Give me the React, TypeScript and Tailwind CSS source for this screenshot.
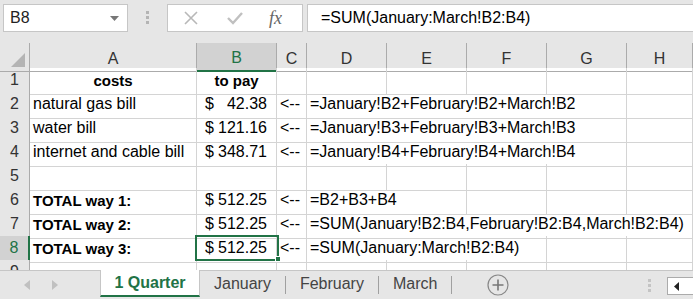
import React from "react";

const FONT = { fontFamily: '"Liberation Sans", Arial, sans-serif' };
const COLS = "grid grid-cols-[30px_167px_80px_30px_80px_80px_80px_80px_66px]";

type Cell = {
  text?: string;
  span?: string;
  align?: "left" | "center";
  bold?: boolean;
  money?: [string, string];
};

const rows: Cell[][] = [
  [
    { text: "costs", align: "center", bold: true },
    { text: "to pay", align: "center", bold: true },
    {},
    {},
    {},
    {},
    {},
    {},
  ],
  [
    { text: "natural gas bill" },
    { money: ["$", "42.38"] },
    { text: "<--" },
    { text: "=January!B2+February!B2+March!B2", span: "col-span-4" },
    {},
  ],
  [
    { text: "water bill" },
    { money: ["$", "121.16"] },
    { text: "<--" },
    { text: "=January!B3+February!B3+March!B3", span: "col-span-4" },
    {},
  ],
  [
    { text: "internet and cable bill" },
    { money: ["$", "348.71"] },
    { text: "<--" },
    { text: "=January!B4+February!B4+March!B4", span: "col-span-4" },
    {},
  ],
  [{}, {}, {}, {}, {}, {}, {}, {}],
  [
    { text: "TOTAL way 1:", bold: true },
    { money: ["$", "512.25"] },
    { text: "<--" },
    { text: "=B2+B3+B4", span: "col-span-2" },
    {},
    {},
    {},
  ],
  [
    { text: "TOTAL way 2:", bold: true },
    { money: ["$", "512.25"] },
    { text: "<--" },
    { text: "=SUM(January!B2:B4,February!B2:B4,March!B2:B4)", span: "col-span-5" },
  ],
  [
    { text: "TOTAL way 3:", bold: true },
    { money: ["$", "512.25"] },
    { text: "<--" },
    { text: "=SUM(January:March!B2:B4)", span: "col-span-3" },
    {},
    {},
  ],
  [{}, {}, {}, {}, {}, {}, {}, {}],
];

function DataCell({ c }: { c: Cell }) {
  if (c.money) {
    return (
      <div className="flex items-end justify-between border-r border-b border-[#d4d4d4] pl-[8px] pr-[9px] pb-[2px]">
        <span>{c.money[0]}</span>
        <span>{c.money[1]}</span>
      </div>
    );
  }
  return (
    <div
      className={`${c.span ?? ""} flex items-end whitespace-nowrap border-r border-b border-[#d4d4d4] px-[3px] pb-[2px] ${
        c.align === "center" ? "justify-center" : ""
      } ${c.bold ? "text-[15px] font-bold" : ""}`}
    >
      {c.text}
    </div>
  );
}

function Toolbar() {
  return (
    <div className="flex h-[43px] items-start bg-[#e6e6e6] pt-[4px]">
      <div className="ml-[3px] flex h-[28px] w-[125px] items-center justify-between border border-[#c6c6c6] bg-white pl-[6px] pr-[8px] text-[16px] text-[#222]">
        <span>B8</span>
        <svg width="9" height="5" viewBox="0 0 9 5">
          <path d="M0 0h9L4.5 5z" fill="#777" />
        </svg>
      </div>
      <div className="flex w-[39px] flex-col items-center gap-[2px] pt-[7px]">
        <span className="h-[3px] w-[3px] bg-[#b4b4b4]" />
        <span className="h-[3px] w-[3px] bg-[#b4b4b4]" />
        <span className="h-[3px] w-[3px] bg-[#b4b4b4]" />
      </div>
      <div className="flex h-[28px] w-[136px] items-center border border-[#c6c6c6] bg-white">
        <svg width="16" height="16" viewBox="0 0 16 16" className="ml-[15px]">
          <path d="M2 2l12 12M14 2L2 14" stroke="#b8b8b8" strokeWidth="1.6" />
        </svg>
        <svg width="18" height="16" viewBox="0 0 18 16" className="ml-[27px]">
          <path d="M2 8l5 5 9-10" stroke="#c0c0c0" strokeWidth="2.4" fill="none" />
        </svg>
        <span
          className="ml-[25px] text-[18px] italic text-[#666]"
          style={{ fontFamily: '"Liberation Serif", "Times New Roman", serif' }}
        >
          fx
        </span>
      </div>
      <div className="ml-[4px] flex h-[28px] flex-1 items-center border border-r-0 border-[#c6c6c6] bg-white pl-[13px] text-[16px] text-black">
        =SUM(January:March!B2:B4)
      </div>
    </div>
  );
}

function Sheet() {
  const headers = ["A", "B", "C", "D", "E", "F", "G", "H"];
  return (
    <div className="relative h-[227px] overflow-hidden bg-white">
      <div className={`${COLS} h-[25px] bg-[#e6e6e6] text-[16px] text-[#333]`}>
        <div className="relative border-r border-b border-[#ababab]">
          <svg width="14" height="14" viewBox="0 0 14 14" className="absolute bottom-[4px] right-[4px]">
            <path d="M14 0V14H0z" fill="#b4b4b4" />
          </svg>
        </div>
        {headers.map((h) =>
          h === "B" ? (
            <div
              key={h}
              className="flex items-center justify-center border-r border-b-2 border-r-[#ababab] border-b-[#217346] bg-[#d2d2d2] pt-[3px] text-[#217346]"
            >
              {h}
            </div>
          ) : (
            <div
              key={h}
              className="flex items-center justify-center border-r border-b border-[#ababab] pt-[3px]"
            >
              {h}
            </div>
          )
        )}
      </div>
      {rows.map((r, i) => {
        const n = i + 1;
        const sel = n === 8;
        return (
          <div key={n} className={`${COLS} h-[24px] text-[16px] text-black`}>
            <div
              className={`flex items-end justify-center border-b pb-[2px] ${
                sel
                  ? "border-r-2 border-r-[#217346] border-b-[#d4d4d4] bg-[#d2d2d2] text-[#217346]"
                  : "border-r border-r-[#ababab] border-b-[#d4d4d4] bg-[#e6e6e6] text-[#333]"
              }`}
            >
              {n}
            </div>
            {r.map((c, j) => (
              <DataCell key={j} c={c} />
            ))}
          </div>
        );
      })}
      <div className="pointer-events-none absolute left-[195px] top-[192px] h-[26px] w-[84px] border-2 border-[#217346]" />
      <div className="pointer-events-none absolute left-[275px] top-[213px] h-[6px] w-[6px] border border-white bg-[#217346]" />
    </div>
  );
}

function Tabs() {
  const others = ["January", "February", "March"];
  return (
    <div className="flex h-[29px] border-t border-[#c6c6c6] bg-[#e6e6e6] text-[16px]">
      <div className="flex w-[100px] items-center">
        <svg width="6" height="10" viewBox="0 0 6 10" className="ml-[24px]">
          <path d="M6 0v10L0 5z" fill="#c0c0c0" />
        </svg>
        <svg width="6" height="10" viewBox="0 0 6 10" className="ml-[22px]">
          <path d="M0 0v10l6-5z" fill="#c0c0c0" />
        </svg>
      </div>
      <div className="-mt-px flex h-[27px] w-[100px] items-center justify-center border-x border-b-2 border-x-[#c6c6c6] border-b-[#217346] bg-white font-bold text-[#217346]">
        1 Quarter
      </div>
      {others.map((t) => (
        <div key={t} className="flex items-center">
          <span className="px-[14px] pb-[2px] text-[#444]">{t}</span>
          <span className="h-[18px] w-px bg-[#a0a0a0]" />
        </div>
      ))}
      <div className="ml-[35px] flex items-center">
        <svg width="22" height="22" viewBox="0 0 22 22">
          <circle cx="11" cy="11" r="10" fill="none" stroke="#888" strokeWidth="1.2" />
          <path d="M11 5.5v11M5.5 11h11" stroke="#777" strokeWidth="1.6" />
        </svg>
      </div>
      <div className="flex-1" />
      <div className="mr-[16px] flex flex-col justify-center gap-[2px]">
        <span className="h-[3px] w-[3px] bg-[#c4c4c4]" />
        <span className="h-[3px] w-[3px] bg-[#c4c4c4]" />
        <span className="h-[3px] w-[3px] bg-[#c4c4c4]" />
      </div>
      <div className="mt-[6px] flex h-[18px] w-[26px] items-center border border-r-0 border-[#ababab] bg-white pl-[6px]">
        <svg width="5" height="9" viewBox="0 0 5 9">
          <path d="M5 0v9L0 4.5z" fill="#222" />
        </svg>
      </div>
    </div>
  );
}

export default function App() {
  return (
    <div className="flex h-[299px] w-[693px] flex-col overflow-hidden bg-white" style={FONT}>
      <Toolbar />
      <Sheet />
      <Tabs />
    </div>
  );
}
